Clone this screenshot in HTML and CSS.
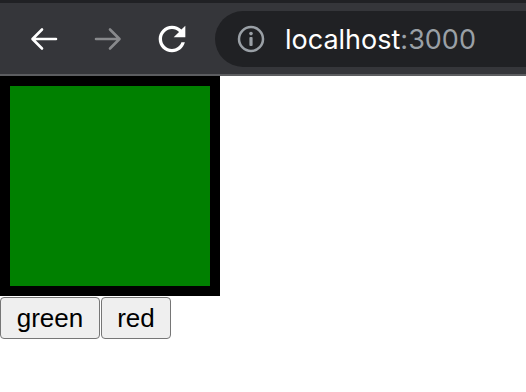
FILE: index.html
```html
<!DOCTYPE html>
<html lang="en">
<head>
    <meta charset="UTF-8">
    <meta name="viewport" content="width=device-width, initial-scale=1.0">
    <title>localhost:3000</title>
    <link rel="stylesheet" href="styles.css">
</head>
<body>
    <!-- browser toolbar -->
    <div class="toolbar">
        <div class="nav-btn">
            <svg width="28" height="24" viewBox="0 0 28 24">
                <path d="M26 12H3M12 2.5 2.5 12l9.5 9.5" fill="none" stroke="#fff" stroke-width="2.6" stroke-linecap="round" stroke-linejoin="round"/>
            </svg>
        </div>
        <div class="nav-btn">
            <svg width="28" height="24" viewBox="0 0 28 24">
                <path d="M2 12h23M16 2.5l9.5 9.5-9.5 9.5" fill="none" stroke="#88898c" stroke-width="2.6" stroke-linecap="round" stroke-linejoin="round"/>
            </svg>
        </div>
        <div class="nav-btn">
            <svg width="40" height="40" viewBox="0 0 24 24">
                <path d="M17.65 6.35C16.2 4.9 14.21 4 12 4c-4.42 0-7.99 3.58-7.99 8s3.57 8 7.99 8c3.73 0 6.84-2.55 7.73-6h-2.08c-.82 2.33-3.04 4-5.65 4-3.31 0-6-2.69-6-6s2.69-6 6-6c1.66 0 3.14.69 4.22 1.78L13 11h7V4l-2.35 2.35z" fill="#fff"/>
            </svg>
        </div>

        <div class="omnibox">
            <svg class="info-icon" width="28" height="28" viewBox="0 0 28 28">
                <circle cx="14" cy="14" r="12" fill="none" stroke="#9aa0a6" stroke-width="2.5"/>
                <circle cx="14" cy="8.6" r="1.8" fill="#9aa0a6"/>
                <rect x="12.4" y="12" width="3.2" height="9" rx="1" fill="#9aa0a6"/>
            </svg>
            <span class="url">localhost<span class="port">:3000</span></span>
        </div>
    </div>

    <div class="page">
        <div class="square"></div>
        <div class="controls">
            <button class="btn-green">green</button>
            <button class="btn-red">red</button>
        </div>
    </div>
</body>
</html>
```

FILE: styles.css
```css
* {
    margin: 0;
    padding: 0;
    box-sizing: border-box;
}

body {
    background-color: #fff;
    font-family: 'Liberation Sans', Arial, sans-serif;
}

/* browser chrome */
.toolbar {
    height: 76px;
    background-color: #35363a;
    border-top: 3px solid #202124;
    border-bottom: 2px solid #5c5d60;
    display: flex;
    align-items: center;
    padding-left: 12px;
}

.nav-btn {
    width: 64px;
    height: 40px;
    display: flex;
    align-items: center;
    justify-content: center;
}

.omnibox {
    flex: 1;
    height: 56px;
    margin-left: 11px;
    margin-top: 1px;
    background-color: #202124;
    border-radius: 28px 0 0 28px;
    display: flex;
    align-items: center;
    padding-left: 22px;
    gap: 20px;
}

.url {
    font-family: Inter, Roboto, sans-serif;
    font-size: 27px;
    color: #fff;
    white-space: nowrap;
}

.port {
    color: #9aa0a6;
}

/* page content */
.square {
    width: 220px;
    height: 220px;
    background-color: #008000;
    border: 10px solid #000;
}

.controls {
    display: flex;
    gap: 1px;
    margin-top: 1px;
}

button {
    height: 42px;
    padding: 0;
    font-family: 'Liberation Sans', Arial, sans-serif;
    font-size: 26px;
    color: #000;
    background-color: #efefef;
    border: 1px solid #767676;
    border-radius: 4px;
}

.btn-green {
    width: 100px;
}

.btn-red {
    width: 70px;
}
```
